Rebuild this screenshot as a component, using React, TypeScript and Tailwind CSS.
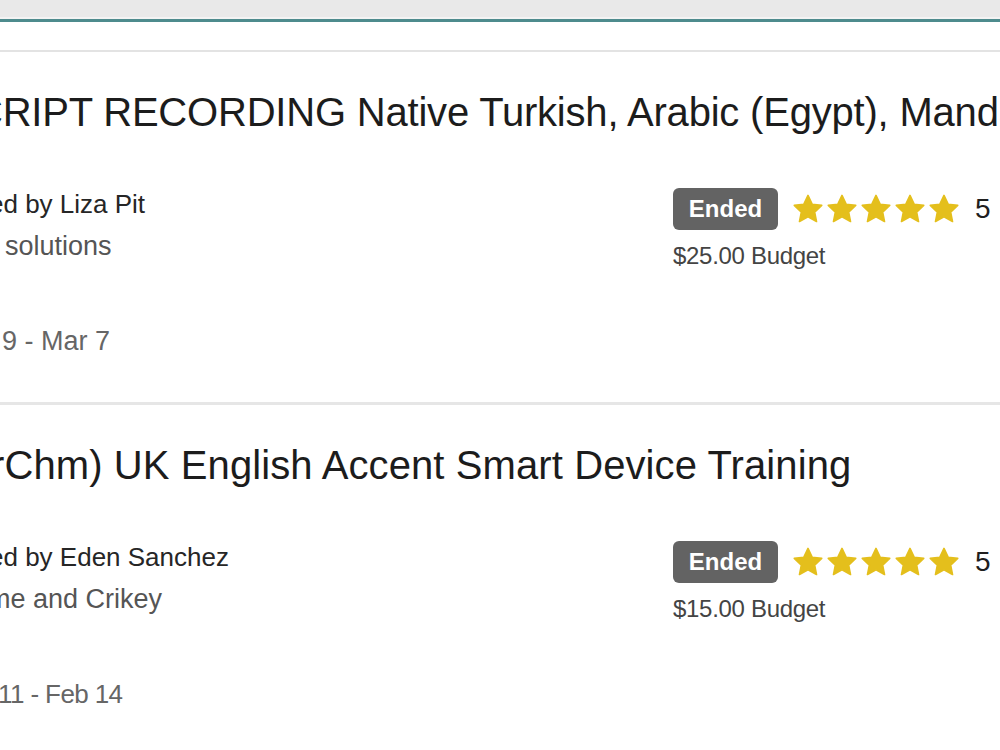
import React from "react";

type Job = {
  title: string;
  owner: string;
  company: string;
  dates: string;
  budget: string;
  rating: number;
};

const jobs: Job[] = [
  {
    title: "CRIPT RECORDING Native Turkish, Arabic (Egypt), Mandarin",
    owner: "ed by Liza Pit",
    company: "solutions",
    dates: "9 - Mar 7",
    budget: "$25.00 Budget",
    rating: 5,
  },
  {
    title: "rChm) UK English Accent Smart Device Training",
    owner: "ed by Eden Sanchez",
    company: "me and Crikey",
    dates: "11 - Feb 14",
    budget: "$15.00 Budget",
    rating: 5,
  },
];

function Star() {
  return (
    <svg viewBox="0 0 24 24" className="h-[32px] w-[32px]" aria-hidden>
      <path
        d="M12 1.8l3.1 6.6 7.2.9-5.3 5 1.4 7.1L12 17.9l-6.4 3.5 1.4-7.1-5.3-5 7.2-.9z"
        fill="#e4bf1c"
        stroke="#e4bf1c"
        strokeWidth="1.2"
        strokeLinejoin="round"
      />
    </svg>
  );
}

function JobCard({ job, first }: { job: Job; first: boolean }) {
  return (
    <div className="h-[350px] pt-[38px]">
      <div
        className={
          first
            ? "ml-[-26px] whitespace-nowrap text-[40px] leading-[44px] tracking-[-0.2px] text-[#1c1c1c]"
            : "ml-[-9px] whitespace-nowrap text-[40px] leading-[44px] tracking-[0.1px] text-[#1c1c1c]"
        }
      >
        {job.title}
      </div>
      <div className="mt-[49px] flex">
        <div className="flex-1 whitespace-nowrap">
          <div className="ml-[-11px] text-[26px] leading-[42px] text-[#262626]">{job.owner}</div>
          <div
            className={
              first
                ? "ml-[5px] text-[27px] leading-[42px] text-[#555555]"
                : "ml-[-12px] text-[27px] leading-[42px] text-[#555555]"
            }
          >
            {job.company}
          </div>
          <div
            className={
              first
                ? "ml-[2px] mt-[53px] text-[27px] leading-[42px] text-[#666666]"
                : "ml-[-2px] mt-[53px] text-[26px] leading-[42px] tracking-[-0.6px] text-[#666666]"
            }
          >
            {job.dates}
          </div>
        </div>
        <div className="w-[327px] shrink-0 pt-[5px]">
          <div className="flex items-center">
            <span className="flex h-[42px] w-[105px] items-center justify-center rounded-[6px] bg-[#636363] text-[24px] font-bold text-white">
              Ended
            </span>
            <span className="ml-[14px] flex gap-[2px]">
              {Array.from({ length: job.rating }).map((_, i) => (
                <Star key={i} />
              ))}
            </span>
            <span className="ml-[15px] whitespace-nowrap text-[28px] leading-none text-[#1f1f1f]">
              {job.rating}
            </span>
          </div>
          <div className="mt-[12px] whitespace-nowrap text-[24px] leading-[28px] tracking-[-0.3px] text-[#444444]">
            {job.budget}
          </div>
        </div>
      </div>
    </div>
  );
}

export default function App() {
  return (
    <div className="h-[750px] w-[1000px] overflow-hidden bg-white font-['Liberation_Sans',Arial,sans-serif]">
      <div className="h-[17px] bg-[#e9e9e9]" />
      <div className="h-[2px] bg-[#f3f3f3]" />
      <div className="h-[3px] bg-[#4e8b8d]" />
      <div className="h-[28px] bg-white" />
      <div className="h-[2px] bg-[#e3e3e3]" />
      <JobCard job={jobs[0]} first />
      <div className="h-[3px] bg-[#e6e6e6]" />
      <JobCard job={jobs[1]} first={false} />
    </div>
  );
}
